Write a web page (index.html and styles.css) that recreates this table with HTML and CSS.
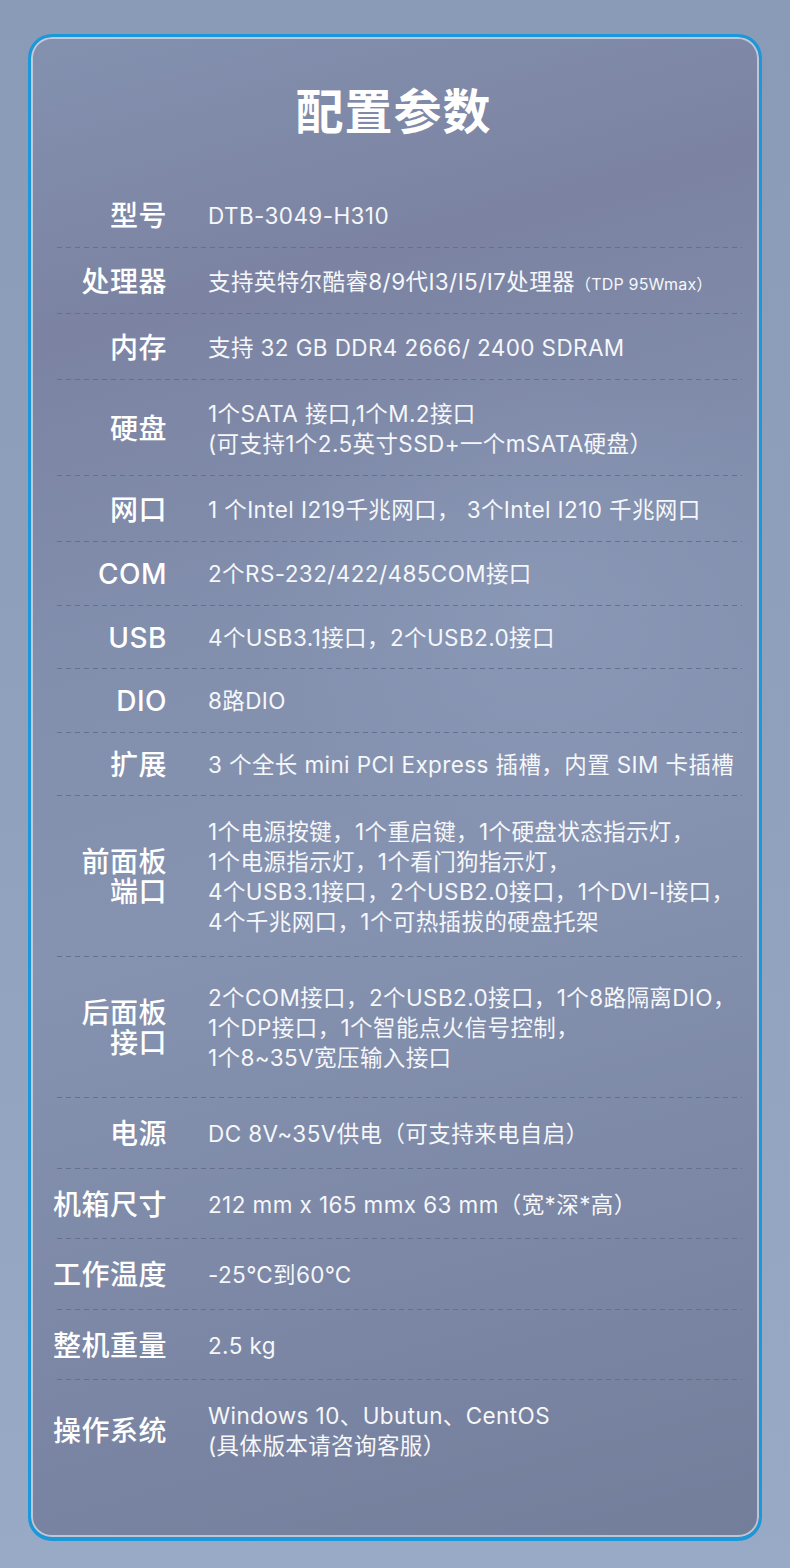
FILE: index.html
```html
<!DOCTYPE html>
<html lang="zh-CN">
<head>
<meta charset="utf-8">
<title>配置参数</title>
<link rel="stylesheet" href="styles.css">
</head>
<body>
<div class="page">
  <section class="card">
    <h1 class="title">配置参数</h1>
    <div class="specs">
      <div class="row row-first">
        <div class="label">型号</div>
        <div class="value">DTB-3049-H310</div>
      </div>
      <div class="row">
        <div class="label">处理器</div>
        <div class="value">支持英特尔酷睿8/9代I3/I5/I7处理器<span class="note">（TDP 95Wmax）</span></div>
      </div>
      <div class="row">
        <div class="label">内存</div>
        <div class="value">支持 32 GB DDR4 2666/ 2400 SDRAM</div>
      </div>
      <div class="row">
        <div class="label">硬盘</div>
        <div class="value"><span class="line">1个SATA 接口,1个M.2接口</span><span class="line">(可支持1个2.5英寸SSD+一个mSATA硬盘）</span></div>
      </div>
      <div class="row">
        <div class="label">网口</div>
        <div class="value">1 个Intel I219千兆网口， 3个Intel I210 千兆网口</div>
      </div>
      <div class="row row-tight">
        <div class="label">COM</div>
        <div class="value">2个RS-232/422/485COM接口</div>
      </div>
      <div class="row row-tight">
        <div class="label">USB</div>
        <div class="value">4个USB3.1接口，2个USB2.0接口</div>
      </div>
      <div class="row row-tight">
        <div class="label">DIO</div>
        <div class="value">8路DIO</div>
      </div>
      <div class="row row-tight">
        <div class="label">扩展</div>
        <div class="value">3 个全长 mini PCI Express 插槽，内置 SIM 卡插槽</div>
      </div>
      <div class="row row-panel">
        <div class="label"><span class="line">前面板</span><span class="line">端口</span></div>
        <div class="value"><span class="line">1个电源按键，1个重启键，1个硬盘状态指示灯，</span><span class="line">1个电源指示灯，1个看门狗指示灯，</span><span class="line">4个USB3.1接口，2个USB2.0接口，1个DVI-I接口，</span><span class="line">4个千兆网口，1个可热插拔的硬盘托架</span></div>
      </div>
      <div class="row row-rear">
        <div class="label"><span class="line">后面板</span><span class="line">接口</span></div>
        <div class="value"><span class="line">2个COM接口，2个USB2.0接口，1个8路隔离DIO，</span><span class="line">1个DP接口，1个智能点火信号控制，</span><span class="line">1个8~35V宽压输入接口</span></div>
      </div>
      <div class="row row-loose">
        <div class="label">电源</div>
        <div class="value">DC 8V~35V供电（可支持来电自启）</div>
      </div>
      <div class="row row-loose">
        <div class="label">机箱尺寸</div>
        <div class="value">212 mm x 165 mmx 63 mm（宽*深*高）</div>
      </div>
      <div class="row row-loose">
        <div class="label">工作温度</div>
        <div class="value">-25℃到60℃</div>
      </div>
      <div class="row row-loose">
        <div class="label">整机重量</div>
        <div class="value">2.5 kg</div>
      </div>
      <div class="row row-loose row-last">
        <div class="label">操作系统</div>
        <div class="value"><span class="line">Windows 10、Ubutun、CentOS</span><span class="line">(具体版本请咨询客服）</span></div>
      </div>
    </div>
  </section>
</div>
</body>
</html>
```

FILE: styles.css
```css
html, body {
  margin: 0;
  padding: 0;
}

body {
  width: 790px;
  height: 1568px;
  overflow: hidden;
  background: linear-gradient(180deg, #8a9bb8 0%, #8fa1bd 50%, #98aac5 100%);
  font-family: Inter, "Noto Sans CJK SC", "Noto Sans", sans-serif;
  color: #ffffff;
}

.page {
  padding: 34px 28px 0 28px;
}

.card {
  box-sizing: border-box;
  height: 1507px;
  border: 3px solid #1a98da;
  border-bottom-width: 4px;
  border-radius: 24px;
  box-shadow: inset 0 0 0 2px rgba(214, 220, 232, 0.75);
  background:
    radial-gradient(ellipse 420px 360px at 70% 38%, rgba(150, 165, 195, 0.35), rgba(150, 165, 195, 0) 70%),
    linear-gradient(165deg, #8391af 0%, #7c83a2 18%, #8290ae 40%, #8593b1 55%, #7d89a7 75%, #737e9b 100%);
  padding: 41px 17px 0 26px;
}

.title {
  margin: 0;
  padding-right: 12px;
  font-family: "Noto Sans CJK SC", sans-serif;
  font-size: 48px;
  line-height: 60px;
  font-weight: 700;
  text-align: center;
  letter-spacing: 1px;
}

.specs {
  margin-top: 45px;
}

.row {
  display: grid;
  grid-template-columns: 110px 1fr;
  column-gap: 41px;
  align-items: center;
  padding: 17.5px 0;
  background-image: repeating-linear-gradient(90deg, #65708e 0 5px, rgba(0, 0, 0, 0) 5px 9px);
  background-size: 100% 1px;
  background-position: left bottom;
  background-repeat: no-repeat;
  border-bottom: 1px solid transparent;
}

.row-tight {
  padding: 16px 0 16.5px;
}

.row-panel {
  padding: 20px 0;
}

.row-rear {
  padding: 25px 0;
}

.row-loose {
  padding: 20px 0 19.5px;
}

.row-last {
  background-image: none;
}

.label {
  justify-self: end;
  font-size: 28px;
  line-height: 30px;
  font-weight: 500;
  text-align: right;
  letter-spacing: 0.5px;
  white-space: nowrap;
}

.value {
  font-size: 22.5px;
  line-height: 30px;
  color: #f6f7fa;
  white-space: nowrap;
  letter-spacing: 0.4px;
}

.line {
  display: block;
}

.note {
  font-size: 16px;
  line-height: 1;
  letter-spacing: 0.2px;
}
```
